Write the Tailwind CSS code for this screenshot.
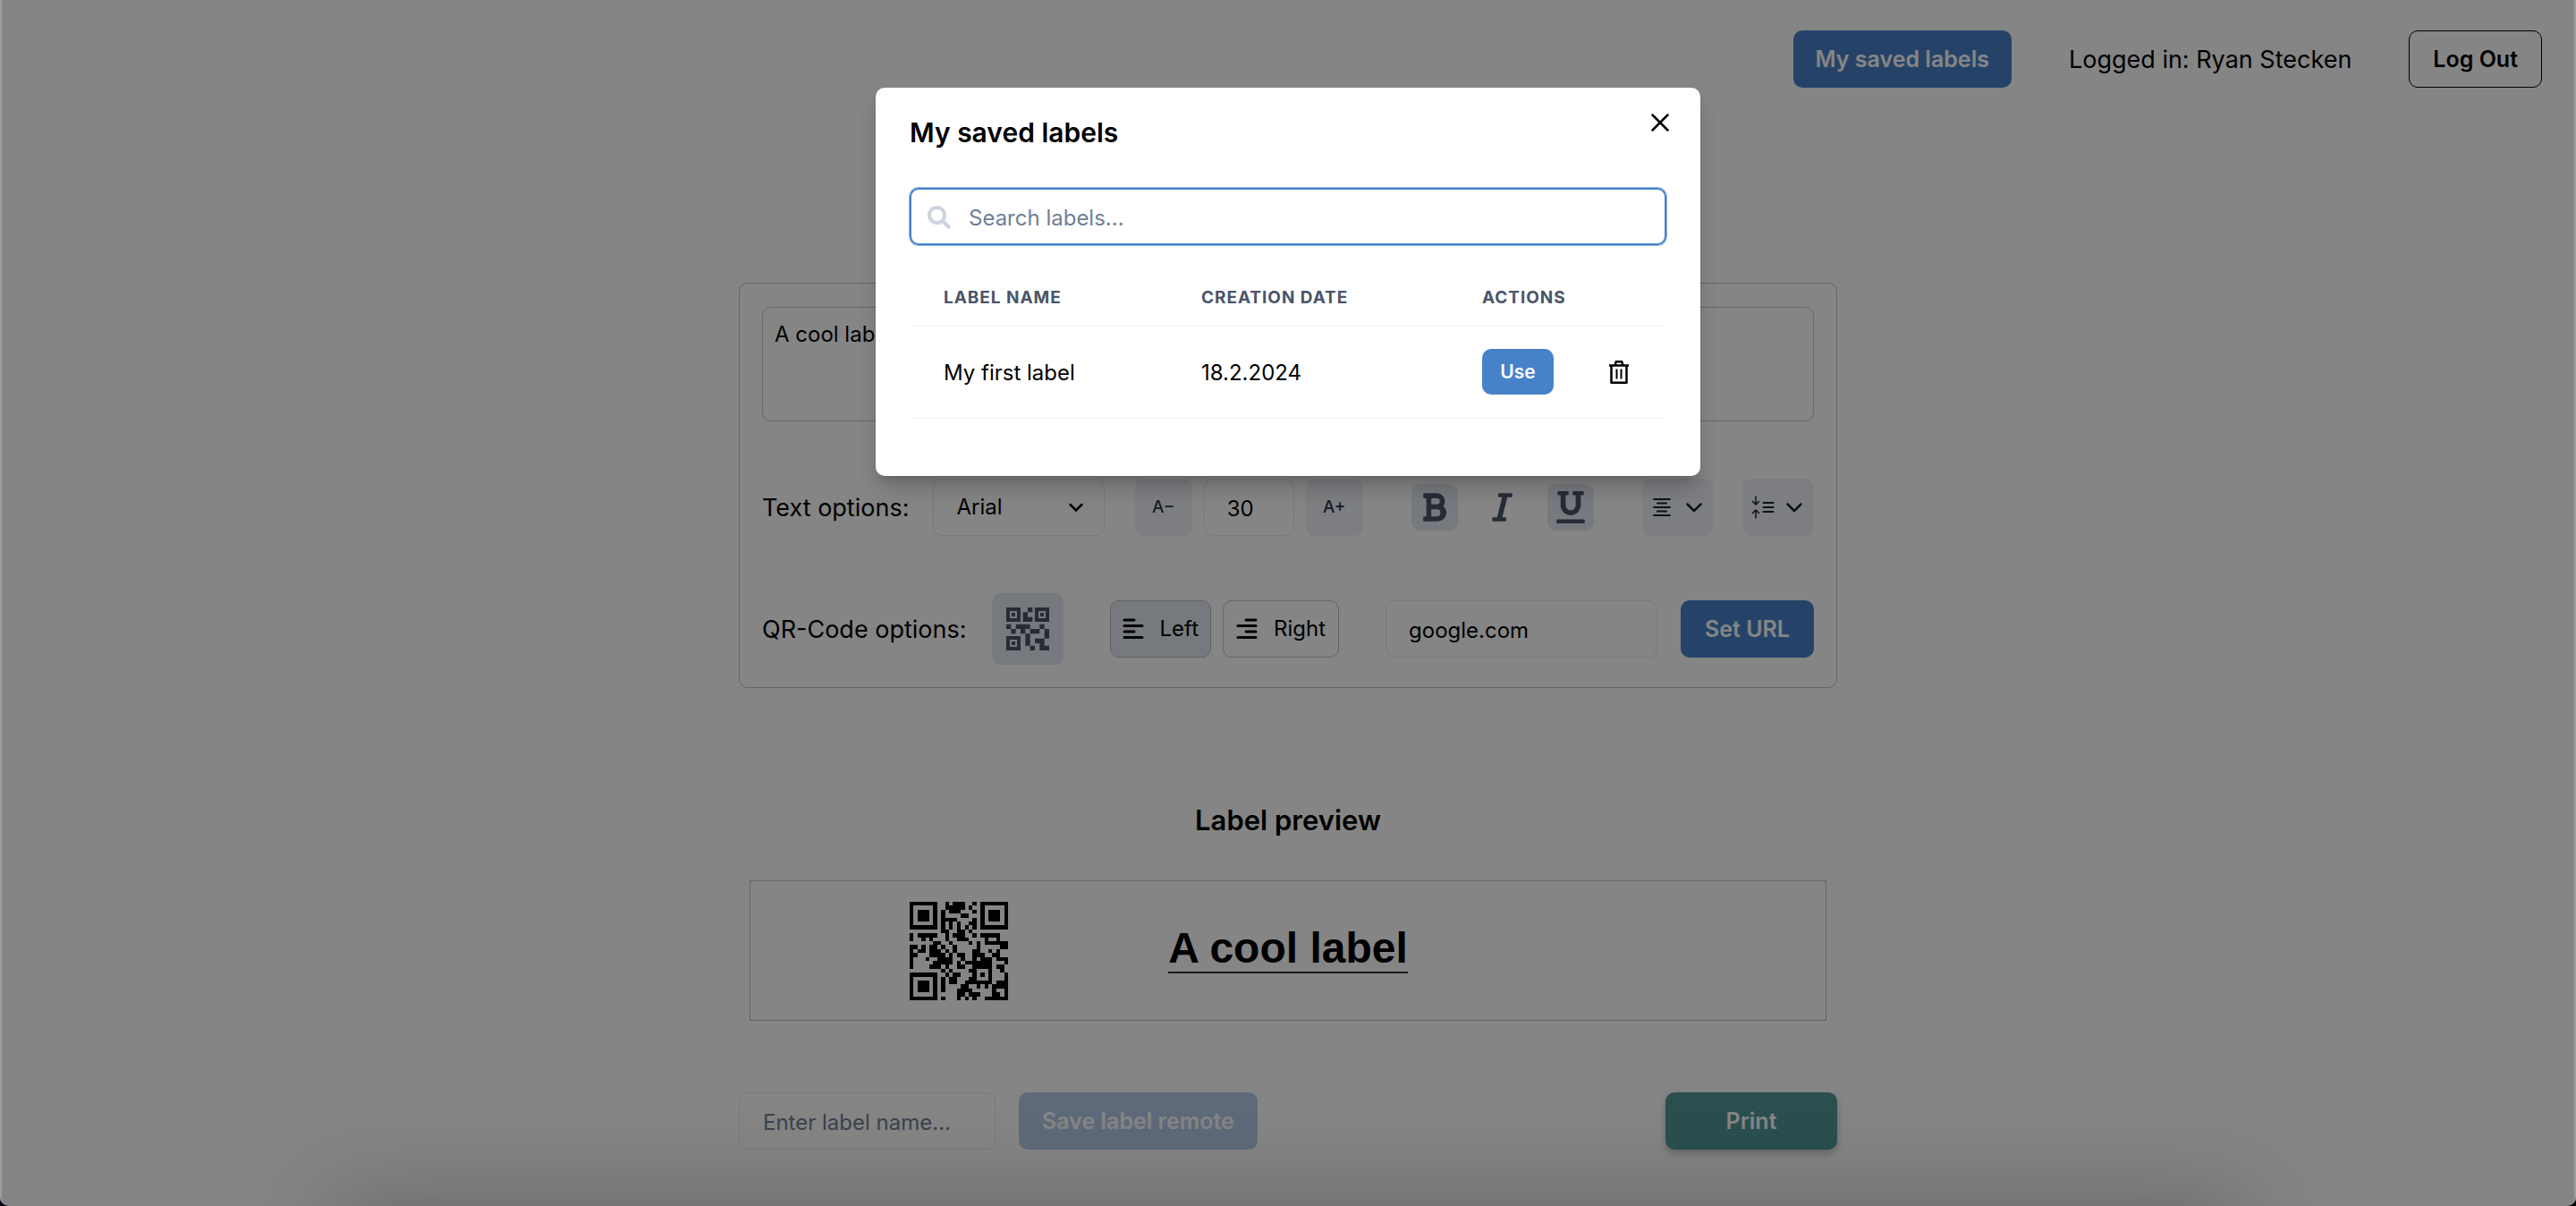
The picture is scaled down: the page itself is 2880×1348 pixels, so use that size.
<!DOCTYPE html>
<html lang="en">
<head>
<meta charset="utf-8">
<title>Label printer</title>
<script src="https://cdn.jsdelivr.net/npm/@tailwindcss/browser@4"></script>
</head>
<body class="bg-[#05060f] font-['Inter',sans-serif] text-2xl text-black">
<div class="relative min-h-screen overflow-hidden rounded-b-[10px] bg-white">
  <header class="flex items-center justify-end gap-16 px-[38px] py-[34px]">
    <button class="h-16 rounded-[10px] bg-[#4781c8] px-[25px] pt-0.5 text-[25px] font-semibold text-white">My saved labels</button>
    <p class="pt-0.5 text-[27px]">Logged in: Ryan Stecken</p>
    <button class="h-16 rounded-[10px] border border-black px-[26px] pt-0.5 text-[25px] font-semibold">Log Out</button>
  </header>

  <main class="mx-auto mt-[184px] w-full max-w-[1228px]">
    <section class="flex flex-col gap-16 rounded-[10px] border border-[#c0c0c0] px-[25px] pt-[26px] pb-[25px]">
      <textarea aria-label="Label text" class="h-32 w-full resize-none rounded-[10px] border border-[#c0cad6] px-[13px] py-3 leading-9">A cool label</textarea>

      <div class="flex items-center justify-between">
        <label for="font" class="pt-0.5 text-[27px]">Text options:</label>
        <div class="relative">
          <select id="font" class="h-16 w-48 appearance-none rounded-[10px] border border-[#e2e8f0] bg-transparent px-[26px]"><option>Arial</option></select>
          <svg class="pointer-events-none absolute top-4 right-4 size-8" viewBox="0 0 24 24"><path d="M16.59 8.59L12 13.17 7.41 8.59 6 10l6 6 6-6z"/></svg>
        </div>
        <div class="ml-2 flex items-center gap-[13px]">
          <button class="size-16 rounded-[10px] bg-[#edf2f7] text-[19px] font-medium text-[#2d3748]">A−</button>
          <input aria-label="Font size" value="30" class="h-16 w-[101px] rounded-[10px] border border-[#e2e8f0] px-[25px] pt-0.5">
          <button class="size-16 rounded-[10px] bg-[#edf2f7] text-[19px] font-medium text-[#2d3748]">A+</button>
        </div>
        <div class="ml-7 flex items-center gap-6 text-[#4a5568]">
          <button aria-label="Bold" class="grid size-[52px] place-items-center rounded-[10px] bg-[#e2e8f0]"><svg class="h-9 w-[27px] fill-current" viewBox="0 0 384 512"><path d="M333.49 238a122 122 0 0 0 27-65.21C367.87 96.49 308 32 233.42 32H34a16 16 0 0 0-16 16v48a16 16 0 0 0 16 16h31.87v288H34a16 16 0 0 0-16 16v48a16 16 0 0 0 16 16h209.32c70.8 0 134.14-51.75 141-122.4 4.74-48.45-16.39-92.06-50.83-119.6zM145.66 112h87.76a48 48 0 0 1 0 96h-87.76zm87.76 288h-87.76V288h87.76a56 56 0 0 1 0 112z"/></svg></button>
          <button aria-label="Italic" class="grid size-[52px] place-items-center rounded-[10px]"><svg class="h-9 w-[23px] fill-current" viewBox="0 0 320 512"><path d="M320 48v32a16 16 0 0 1-16 16h-62.76l-80 320H208a16 16 0 0 1 16 16v32a16 16 0 0 1-16 16H16a16 16 0 0 1-16-16v-32a16 16 0 0 1 16-16h62.76l80-320H112a16 16 0 0 1-16-16V48a16 16 0 0 1 16-16h192a16 16 0 0 1 16 16z"/></svg></button>
          <button aria-label="Underline" class="grid size-[52px] place-items-center rounded-[10px] bg-[#e2e8f0]"><svg class="h-9 w-8 fill-current" viewBox="0 0 448 512"><path d="M32 64h32v160c0 88.22 71.78 160 160 160s160-71.78 160-160V64h32a16 16 0 0 0 16-16V16a16 16 0 0 0-16-16H272a16 16 0 0 0-16 16v32a16 16 0 0 0 16 16h32v160a80 80 0 0 1-160 0V64h32a16 16 0 0 0 16-16V16a16 16 0 0 0-16-16H32a16 16 0 0 0-16 16v32a16 16 0 0 0 16 16zm400 384H16a16 16 0 0 0-16 16v32a16 16 0 0 0 16 16h416a16 16 0 0 0 16-16v-32a16 16 0 0 0-16-16z"/></svg></button>
        </div>
        <div class="ml-7 flex gap-8 text-[#1a202c]">
          <button aria-label="Text alignment" class="flex h-16 w-20 items-center justify-between rounded-[10px] bg-[#edf2f7] pr-3 pl-[11px]">
            <svg class="h-6 w-[22px] fill-none stroke-current stroke-2" stroke-linecap="round" viewBox="0 0 22 24"><path d="M2 3h18M6 7.500h10M2 12h18M6 16.500h10M2 21h18"/></svg>
            <svg class="h-6 w-5 fill-none stroke-current" stroke-width="2.500" stroke-linecap="round" stroke-linejoin="round" viewBox="0 0 20 24"><path d="M2.500 8.500l7.500 7.500 7.500-7.500"/></svg>
          </button>
          <button aria-label="Line spacing" class="flex h-16 w-20 items-center justify-between rounded-[10px] bg-[#edf2f7] pr-3 pl-[10px]">
            <svg class="h-7 w-[26px] fill-none stroke-current" stroke-width="1.500" stroke-linecap="round" stroke-linejoin="round" viewBox="0 0 26 28"><path d="M5 2v9M1.500 7.500L5 11l3.500-3.500M5 26v-9M1.500 20.500L5 17l3.500 3.500"/><path stroke-width="2" d="M13.500 9h11M13.500 14h11M13.500 19h11"/></svg>
            <svg class="h-6 w-5 fill-none stroke-current" stroke-width="2.500" stroke-linecap="round" stroke-linejoin="round" viewBox="0 0 20 24"><path d="M2.500 8.500l7.500 7.500 7.500-7.500"/></svg>
          </button>
        </div>
      </div>

      <div class="flex items-center">
        <span class="pt-0.5 text-[27px]">QR-Code options:</span>
        <button aria-label="QR code" class="ml-7 grid size-20 place-items-center rounded-[10px] bg-[#e2e8f0] text-[#4a5568]">
          <svg class="size-12 fill-current" viewBox="0 0 144 144"><path fill-rule="evenodd" d="M0 0h48v48H0zM12 12v24h24V12zM18 18h12v12H18zM96 0h48v48H96zM108 12v24h24V12zM114 18h12v12h-12zM0 96h48v48H0zM12 108v24h24v-24zM18 114h12v12H18z"/><path d="M72 0h16v16H72zM56 16h16v16h16v16H56zM0 56h16v16H0zM16 72h16v16H16zM32 56h48v16h-16v16h-16v-16h-16zM80 72h32v-16h16v16h-16v16h-32zM64 88h16v40h-16zM128 72h16v32h-16zM96 104h32v24h16v16h-32v-24h-16zM80 128h16v16h-16z"/></svg>
        </button>
        <div class="ml-[52px] flex gap-[13px]">
          <button class="flex h-16 items-center gap-[18px] rounded-[10px] border border-[#c0c0c0] bg-[#e2e8f0] px-[13px]"><svg class="size-6 fill-none stroke-black" stroke-width="3" stroke-linecap="round" viewBox="0 0 24 24"><path d="M2 2h11M2 8.500h20M2 15h11M2 21.500h20"/></svg>Left</button>
          <button class="flex h-16 items-center gap-[18px] rounded-[10px] border border-[#c0c0c0] px-[14px]"><svg class="size-6 fill-none stroke-black" stroke-width="3" stroke-linecap="round" viewBox="0 0 24 24"><path d="M11 2h11M2 8.500h20M11 15h11M2 21.500h20"/></svg>Right</button>
        </div>
        <input aria-label="QR code URL" value="google.com" class="ml-[52px] h-16 min-w-0 flex-1 rounded-[10px] border border-[#e2e8f0] px-[25px] pt-0.5">
        <button class="ml-[26px] h-16 rounded-[10px] bg-[#4781c8] px-[27px] pt-0.5 text-[25px] font-semibold text-white">Set URL</button>
      </div>
    </section>

    <h2 class="mt-[124px] text-center text-[31px] leading-[48px] font-semibold">Label preview</h2>
    <div class="mx-3 mt-[43px] grid h-[157px] grid-cols-[1fr_auto_1fr] items-center border border-[#c0c0c0]">
      <svg id="code" role="img" aria-label="QR code for google.com" class="ml-[178px] size-[110px]" viewBox="0 0 25 25"></svg>
      <p class="mb-1 border-b-2 border-black/80 font-['Liberation_Sans',sans-serif] text-5xl leading-[52px] font-bold">A cool label</p>
    </div>

    <div class="mt-20 flex items-center gap-[26px]">
      <input aria-label="Label name" placeholder="Enter label name..." class="h-16 w-[287px] rounded-[10px] border border-[#e2e8f0] px-[26px] pt-0.5 placeholder:text-[#718096]">
      <button disabled class="h-16 rounded-[10px] bg-[#4781c8] px-[26px] pt-0.5 text-[25px] font-semibold text-white opacity-40">Save label remote</button>
      <button class="ml-auto h-16 w-48 rounded-[10px] bg-[#519896] pt-0.5 text-[25px] font-semibold text-white shadow-[0_4px_8px_rgba(0,0,0,0.25)]">Print</button>
    </div>
  </main>

  <div class="absolute inset-0 border-x-2 border-white/20 bg-black/48"></div>
  <div class="pointer-events-none absolute inset-x-[380px] top-full h-10 shadow-[0_10px_100px_10px_rgba(0,0,0,0.3)]"></div>

  <div class="absolute inset-0 flex items-start justify-center pt-[98px]">
    <div role="dialog" aria-labelledby="dialog-title" class="relative w-full max-w-[922px] rounded-[10px] bg-white px-[38px] pt-[26px] pb-16 shadow-[0_16px_24px_-4px_rgba(0,0,0,0.2),0_6px_10px_-3px_rgba(0,0,0,0.1)]">
      <h1 id="dialog-title" class="text-[30px] leading-[48px] font-semibold">My saved labels</h1>
      <button aria-label="Close" class="absolute top-[13px] right-5 grid size-[51px] place-items-center"><svg class="size-5 fill-none stroke-black" stroke-width="2.500" stroke-linecap="round" viewBox="0 0 20 20"><path d="M1.500 1.500l17 17M18.500 1.500l-17 17"/></svg></button>
      <div class="relative mt-[38px]">
        <svg class="absolute top-5 left-5 size-[26px] fill-[#cbd5e0]" viewBox="0 0 512 512"><path d="M505 442.700L405.300 343c-4.500-4.500-10.600-7-17-7H372c27.600-35.300 44-79.700 44-128C416 93.100 322.900 0 208 0S0 93.100 0 208s93.100 208 208 208c48.300 0 92.700-16.400 128-44v16.300c0 6.400 2.500 12.500 7 17l99.700 99.700c9.400 9.400 24.600 9.400 33.900 0l28.300-28.300c9.400-9.400 9.400-24.600.1-34zM208 336c-70.700 0-128-57.200-128-128s57.200-128 128-128 128 57.200 128 128-57.200 128-128 128z"/></svg>
        <input aria-label="Search labels" placeholder="Search labels..." class="h-16 w-full rounded-[10px] border-2 border-[#4781c8] pt-0.5 pr-6 pl-16 ring-1 ring-[#4781c8]/60 placeholder:text-[#718096]">
      </div>
      <table class="mt-6 w-full table-fixed border-collapse text-left">
        <colgroup><col class="w-[288px]"><col class="w-[314px]"><col></colgroup>
        <thead class="text-[19px] tracking-wider text-[#4a5568] uppercase">
          <tr class="h-[66px] border-b border-[#edf2f7]"><th class="pt-1 pl-[38px]">Label name</th><th class="pt-1 pl-[38px]">Creation date</th><th class="pt-1 pl-[38px]">Actions</th></tr>
        </thead>
        <tbody>
          <tr class="h-[103px] border-b border-[#edf2f7]">
            <td class="pt-0.5 pl-[38px]">My first label</td>
            <td class="pt-0.5 pl-[38px]">18.2.2024</td>
            <td class="pl-[38px]"><div class="flex items-center gap-[61px]">
              <button class="h-[51px] w-20 rounded-[10px] bg-[#4781c8] text-[21px] font-semibold text-white">Use</button>
              <button aria-label="Delete"><svg class="h-7 w-6 fill-none stroke-black" stroke-width="2.500" stroke-linejoin="round" viewBox="0 0 24 28"><path d="M1 6.500h22M3.500 6.500v19.200h17V6.500M7.500 6.500l1.200-4.200h6.600l1.200 4.200"/><path stroke-width="2" d="M9.500 10.500v11M14.500 10.500v11"/></svg></button>
            </div></td>
          </tr>
        </tbody>
      </table>
    </div>
  </div>
</div>
<script>
  // Modules of the QR code, one string per row
  const modules = [
    "1111111001011100101111111",
    "1000001001111101001000001",
    "1011101010111000101011101",
    "1011101010000110001011101",
    "1011101011110000101011101",
    "1000001010101001101000001",
    "1111111010101010101111111",
    "0000000011001101000000000",
    "1011111001011100101111100",
    "1001010001001110000100100",
    "0000001100100001010111111",
    "1101011010010000010000011",
    "1011011101010000110010100",
    "1100011110101100111001100",
    "1000100111100100101110111",
    "1000001111101011111110001",
    "1000011101001100111110110",
    "0000000010100001100010010",
    "1111111001011000101010001",
    "1000001010110001100010001",
    "1011101010110011111110111",
    "1011101010000110010101111",
    "1011101010001111000001001",
    "1000001000001101110001101",
    "1111111010001010100111111"
  ];
  document.getElementById("code").innerHTML = '<path shape-rendering="crispEdges" d="' +
    modules.map((row, y) => [...row].map((m, x) => m === "1" ? `M${x} ${y}h1v1h-1z` : "").join("")).join("") + '"/>';
</script>
</body>
</html>
